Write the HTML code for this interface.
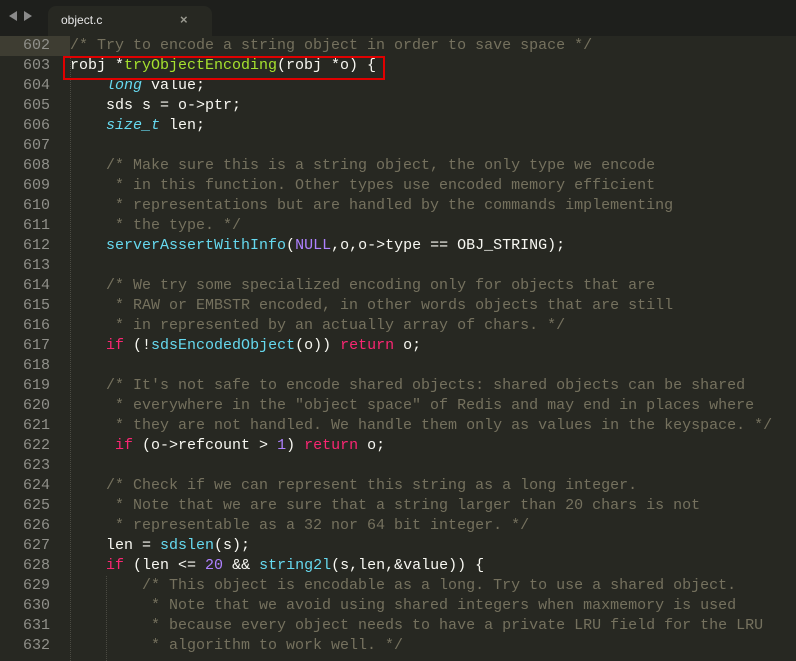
<!DOCTYPE html>
<html><head><meta charset="utf-8"><style>
html,body{margin:0;padding:0;background:#272822;width:796px;height:661px;overflow:hidden}
.tabbar{position:absolute;left:0;top:0;width:796px;height:36px;background:#1e1f1c}
.tab{position:absolute;left:48px;top:6px;width:164px;height:30px;background:#272822;border-radius:8px 8px 0 0}
.tab span{position:absolute;left:13px;top:7px;color:#e8e8e8;font:12px "Liberation Sans",sans-serif}
.tab b{position:absolute;left:132px;top:6px;color:#9a9a90;font:bold 13px "Liberation Sans",sans-serif}
.arr{position:absolute;top:11px;width:0;height:0;border-top:5px solid transparent;border-bottom:5px solid transparent}
.code{position:absolute;left:0;top:36px;font:15px "Liberation Mono",monospace;color:#f8f8f2}
.row{height:20px;line-height:20px;white-space:pre;position:relative}
.ln{display:inline-block;width:50px;text-align:right;color:#90908a}
.tx{position:absolute;left:70px;top:0}
.hl{position:absolute;left:0;top:36px;width:70px;height:20px;background:#3e3d32}
.c{color:#75715e}.k{color:#f92672}.f{color:#66d9ef}.g{color:#a6e22e}.t{color:#66d9ef;font-style:italic}.n{color:#ae81ff}
.guide{position:absolute;left:70px;top:56px;width:0;height:605px;border-left:1px dotted #4a4a42}
.guide2{position:absolute;left:106px;top:576px;width:0;height:85px;border-left:1px dotted #4a4a42}
.box{position:absolute;left:63px;top:56px;width:318px;height:20px;border:2px solid #e00000}
</style></head><body>
<div class="tabbar">
<div class="arr" style="left:9px;border-right:8px solid #8a8a8a"></div>
<div class="arr" style="left:24px;border-left:8px solid #8a8a8a"></div>
<div class="tab"><span>object.c</span><b>×</b></div>
</div>
<div class="hl"></div>
<div class="guide"></div><div class="guide2"></div>
<div class="code">
<div class="row"><span class="ln">602</span><span class="tx c">/* Try to encode a string object in order to save space */</span></div>
<div class="row"><span class="ln">603</span><span class="tx">robj *<span class="g">tryObjectEncoding</span>(robj *o) {</span></div>
<div class="row"><span class="ln">604</span><span class="tx">    <span class="t">long</span> value;</span></div>
<div class="row"><span class="ln">605</span><span class="tx">    sds s = o-&gt;ptr;</span></div>
<div class="row"><span class="ln">606</span><span class="tx">    <span class="t">size_t</span> len;</span></div>
<div class="row"><span class="ln">607</span></div>
<div class="row"><span class="ln">608</span><span class="tx c">    /* Make sure this is a string object, the only type we encode</span></div>
<div class="row"><span class="ln">609</span><span class="tx c">     * in this function. Other types use encoded memory efficient</span></div>
<div class="row"><span class="ln">610</span><span class="tx c">     * representations but are handled by the commands implementing</span></div>
<div class="row"><span class="ln">611</span><span class="tx c">     * the type. */</span></div>
<div class="row"><span class="ln">612</span><span class="tx">    <span class="f">serverAssertWithInfo</span>(<span class="n">NULL</span>,o,o-&gt;type == OBJ_STRING);</span></div>
<div class="row"><span class="ln">613</span></div>
<div class="row"><span class="ln">614</span><span class="tx c">    /* We try some specialized encoding only for objects that are</span></div>
<div class="row"><span class="ln">615</span><span class="tx c">     * RAW or EMBSTR encoded, in other words objects that are still</span></div>
<div class="row"><span class="ln">616</span><span class="tx c">     * in represented by an actually array of chars. */</span></div>
<div class="row"><span class="ln">617</span><span class="tx">    <span class="k">if</span> (!<span class="f">sdsEncodedObject</span>(o)) <span class="k">return</span> o;</span></div>
<div class="row"><span class="ln">618</span></div>
<div class="row"><span class="ln">619</span><span class="tx c">    /* It's not safe to encode shared objects: shared objects can be shared</span></div>
<div class="row"><span class="ln">620</span><span class="tx c">     * everywhere in the "object space" of Redis and may end in places where</span></div>
<div class="row"><span class="ln">621</span><span class="tx c">     * they are not handled. We handle them only as values in the keyspace. */</span></div>
<div class="row"><span class="ln">622</span><span class="tx">     <span class="k">if</span> (o-&gt;refcount &gt; <span class="n">1</span>) <span class="k">return</span> o;</span></div>
<div class="row"><span class="ln">623</span></div>
<div class="row"><span class="ln">624</span><span class="tx c">    /* Check if we can represent this string as a long integer.</span></div>
<div class="row"><span class="ln">625</span><span class="tx c">     * Note that we are sure that a string larger than 20 chars is not</span></div>
<div class="row"><span class="ln">626</span><span class="tx c">     * representable as a 32 nor 64 bit integer. */</span></div>
<div class="row"><span class="ln">627</span><span class="tx">    len = <span class="f">sdslen</span>(s);</span></div>
<div class="row"><span class="ln">628</span><span class="tx">    <span class="k">if</span> (len &lt;= <span class="n">20</span> &amp;&amp; <span class="f">string2l</span>(s,len,&amp;value)) {</span></div>
<div class="row"><span class="ln">629</span><span class="tx c">        /* This object is encodable as a long. Try to use a shared object.</span></div>
<div class="row"><span class="ln">630</span><span class="tx c">         * Note that we avoid using shared integers when maxmemory is used</span></div>
<div class="row"><span class="ln">631</span><span class="tx c">         * because every object needs to have a private LRU field for the LRU</span></div>
<div class="row"><span class="ln">632</span><span class="tx c">         * algorithm to work well. */</span></div>
</div>
<div class="box"></div>
</body></html>
